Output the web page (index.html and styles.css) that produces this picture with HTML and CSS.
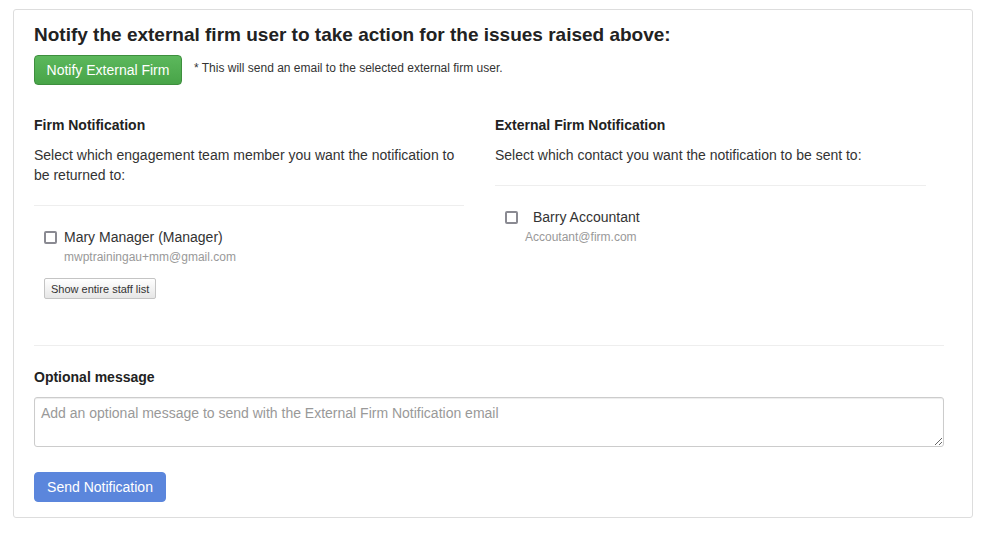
FILE: index.html
```html
<!DOCTYPE html>
<html>
<head>
    <title>Notify External Firm</title>
    <link rel="stylesheet" href="styles.css">
</head>
<body>
    <div class="panel">
        <h2 class="title">Notify the external firm user to take action for the issues raised above:</h2>
        <div class="notify-row">
            <button class="btn btn-success">Notify External Firm</button>
            <span class="note">* This will send an email to the selected external firm user.</span>
        </div>

        <div class="columns">
            <div class="col">
                <h4>Firm Notification</h4>
                <p class="desc">Select which engagement team member you want the notification to be returned to:</p>
                <hr>
                <div class="contact">
                    <label class="check"><input type="checkbox"> Mary Manager (Manager)</label>
                    <div class="email">mwptrainingau+mm@gmail.com</div>
                </div>
                <button class="btn-small">Show entire staff list</button>
            </div>
            <div class="col col-right">
                <h4>External Firm Notification</h4>
                <p class="desc">Select which contact you want the notification to be sent to:</p>
                <hr>
                <div class="contact">
                    <label class="check"><input type="checkbox"> <span class="ext-name">Barry Accountant</span></label>
                    <div class="email">Accoutant@firm.com</div>
                </div>
            </div>
        </div>

        <hr class="full">

        <h4>Optional message</h4>
        <textarea class="message" placeholder="Add an optional message to send with the External Firm Notification email"></textarea>

        <button class="btn btn-primary">Send Notification</button>
    </div>
</body>
</html>
```

FILE: styles.css
```css
body {
    margin: 0;
    background-color: #ffffff;
    font-family: Arial, "Liberation Sans", Helvetica, sans-serif;
    font-size: 14px;
    line-height: 20px;
    color: #333333;
}

.panel {
    margin: 9px 21px 0 13px;
    border: 1px solid #dddddd;
    border-radius: 3px;
    padding: 12px 28px 15px 20px;
    height: 480px;
}

.title {
    margin: 0 0 7px 0;
    font-size: 19px;
    line-height: 26px;
    font-weight: bold;
    color: #222222;
}

.notify-row {
    display: flex;
    align-items: center;
    gap: 12px;
}

.btn {
    font-family: Arial, "Liberation Sans", sans-serif;
    font-size: 14px;
    color: #ffffff;
    border-radius: 4px;
    height: 30px;
    padding: 0;
    white-space: nowrap;
    cursor: pointer;
}

.btn-success {
    background: linear-gradient(to bottom, #5cb85c, #48a448);
    border: 1px solid #3e8f3e;
    width: 148px;
}

.btn-primary {
    background-color: #5b86dc;
    border: 1px solid #5b86dc;
    width: 132px;
    margin-top: 25px;
}

.note {
    font-size: 12px;
    color: #333333;
    position: relative;
    top: -2px;
}

.columns {
    display: flex;
    gap: 31px;
    margin-top: 30px;
}

.col {
    width: 430px;
}

.col-right {
    width: 431px;
}

h4 {
    margin: 0;
    font-size: 14px;
    line-height: 20px;
    font-weight: bold;
    color: #222222;
}

.desc {
    margin: 10px 0 0 0;
}

hr {
    border: 0;
    border-top: 1px solid #eeeeee;
    margin: 20px 0 0 0;
}

.contact {
    padding: 21px 0 0 10px;
}

.check {
    display: flex;
    align-items: center;
    gap: 7px;
}

.check input {
    -webkit-appearance: none;
    appearance: none;
    width: 13px;
    height: 13px;
    margin: 0;
    border: 2px solid #8a8a92;
    border-radius: 2px;
    background: #ffffff;
}

.ext-name {
    margin-left: 8px;
}

.email {
    margin: 0 0 0 20px;
    font-size: 12px;
    color: #999999;
}

.btn-small {
    margin: 11px 0 0 10px;
    height: 21px;
    padding: 0 6px;
    font-family: Arial, "Liberation Sans", sans-serif;
    font-size: 11px;
    color: #333333;
    background: linear-gradient(to bottom, #ffffff, #e6e6e6);
    border: 1px solid #c4c4c4;
    border-radius: 2px;
    cursor: pointer;
}

hr.full {
    margin-top: 46px;
}

.full + h4 {
    margin-top: 21px;
}

.message {
    display: block;
    box-sizing: border-box;
    width: 910px;
    height: 50px;
    margin-top: 10px;
    padding: 5px 6px;
    font-family: Arial, "Liberation Sans", sans-serif;
    font-size: 14px;
    line-height: 20px;
    color: #333333;
    border: 1px solid #cccccc;
    border-radius: 3px;
    box-shadow: inset 0 1px 1px rgba(0, 0, 0, 0.075);
}

.message::placeholder {
    color: #999999;
}
```
